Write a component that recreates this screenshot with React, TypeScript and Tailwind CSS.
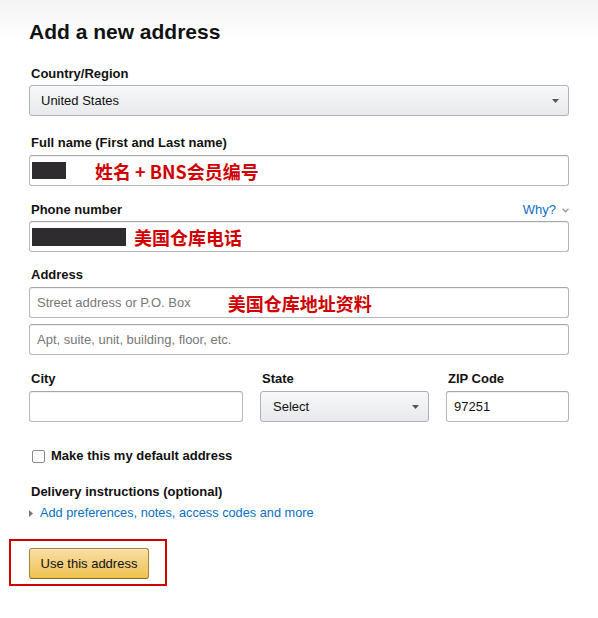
import React from 'react'

const sans = { fontFamily: '"Liberation Sans", Arial, sans-serif' }

function Label({ children, right }: { children: React.ReactNode; right?: React.ReactNode }) {
  return (
    <div className="flex items-center justify-between pl-[2px] text-[13px] leading-[18px] font-bold text-[#111]">
      <span>{children}</span>
      {right}
    </div>
  )
}

function Field({ children, className = '' }: { children?: React.ReactNode; className?: string }) {
  return (
    <div
      className={`flex h-[31px] items-center rounded-[3px] border border-[#b7b7b7] border-t-[#a6a6a6] bg-white shadow-[inset_0_1px_0_rgba(0,0,0,0.06)] ${className}`}
    >
      {children}
    </div>
  )
}

function Caret() {
  return (
    <svg width="7" height="4" viewBox="0 0 7 4" className="shrink-0">
      <path d="M0 0h7L3.5 4z" fill="#555" />
    </svg>
  )
}

function Note({ children, className = '' }: { children: React.ReactNode; className?: string }) {
  return (
    <span
      className={`text-[18px] leading-none font-bold text-[#d00000] ${className}`}
      style={{ fontFamily: '"Noto Sans CJK SC", "Noto Sans", sans-serif' }}
    >
      {children}
    </span>
  )
}

export default function App() {
  return (
    <div
      className="min-h-screen bg-[linear-gradient(to_bottom,#f3f3f3_0px,#ffffff_38px)] px-[29px] pt-[20px] text-[#111]"
      style={sans}
    >
      <div className="w-[540px]">
        <h1 className="text-[21px] leading-[24px] font-bold text-[#111]">Add a new address</h1>

        <div className="mt-[21px]">
          <Label>Country/Region</Label>
          <div className="mt-[2px] flex h-[31px] items-center justify-between rounded-[3px] border border-[#adb1b8] bg-gradient-to-b from-[#f7f8fa] to-[#e7e9ec] pl-[11px] pr-[9px] text-[13px] shadow-[0_1px_0_rgba(255,255,255,0.6)_inset]">
            <span>United States</span>
            <Caret />
          </div>
        </div>

        <div className="mt-[18px]">
          <Label>Full name (First and Last name)</Label>
          <Field className="mt-[3px] pl-[2px]">
            <span className="h-[17px] w-[34px] bg-[#2e2c2f]" />
            <Note className="ml-[29px]">姓名 + BNS会员编号</Note>
          </Field>
        </div>

        <div className="mt-[15px]">
          <Label
            right={
              <span className="flex items-center gap-[6px] font-normal text-[13px] text-[#0a6fc2]">
                Why?
                <svg width="7" height="5" viewBox="0 0 7 5">
                  <path d="M0.5 0.8L3.5 3.8L6.5 0.8" fill="none" stroke="#9a9a9a" strokeWidth="1.3" />
                </svg>
              </span>
            }
          >
            Phone number
          </Label>
          <Field className="mt-[2px] pl-[2px]">
            <span className="h-[18px] w-[94px] bg-[#2e2c2f]" />
            <Note className="ml-[8px]">美国仓库电话</Note>
          </Field>
        </div>

        <div className="mt-[14px]">
          <Label>Address</Label>
          <Field className="mt-[3px] pl-[7px]">
            <span className="text-[13px] text-[#777]">Street address or P.O. Box</span>
            <Note className="ml-[37px]">美国仓库地址资料</Note>
          </Field>
          <Field className="mt-[6px] pl-[7px]">
            <span className="text-[13px] text-[#777]">Apt, suite, unit, building, floor, etc.</span>
          </Field>
        </div>

        <div className="mt-[15px] grid grid-cols-[214px_169px_123px] gap-x-[17px]">
          <div>
            <Label>City</Label>
            <Field className="mt-[3px]" />
          </div>
          <div>
            <Label>State</Label>
            <div className="mt-[3px] flex h-[31px] items-center justify-between rounded-[3px] border border-[#adb1b8] bg-gradient-to-b from-[#f7f8fa] to-[#e7e9ec] pl-[12px] pr-[9px] text-[13px]">
              <span>Select</span>
              <Caret />
            </div>
          </div>
          <div>
            <Label>ZIP Code</Label>
            <Field className="mt-[3px] pl-[7px]">
              <span className="text-[13px]">97251</span>
            </Field>
          </div>
        </div>

        <div className="mt-[25px] flex items-center pl-[3px] text-[13px] leading-[18px] font-bold">
          <span className="h-[13px] w-[13px] rounded-[2px] border border-[#8a8a8a] bg-white" />
          <span className="ml-[6px]">Make this my default address</span>
        </div>

        <div className="mt-[18px]">
          <Label>Delivery instructions (optional)</Label>
          <div className="mt-[3px] flex items-center text-[12.75px] leading-[18px] text-[#0a6fc2]">
            <svg width="4" height="7" viewBox="0 0 4 7" className="mr-[7px]">
              <path d="M0 0L4 3.5L0 7z" fill="#777" />
            </svg>
            <span>Add preferences, notes, access codes and more</span>
          </div>
        </div>

        <div className="-ml-[20px] mt-[17px] inline-block border-2 border-[#d00000] pt-[7px] pr-[16px] pb-[5px] pl-[18px]">
          <button className="h-[31px] w-[120px] rounded-[3px] border border-[#a88734] border-b-[#846a29] bg-gradient-to-b from-[#f7dfa5] to-[#f0c14b] text-[13px] text-[#111] shadow-[inset_0_1px_0_rgba(255,255,255,0.4)]">
            Use this address
          </button>
        </div>
      </div>
    </div>
  )
}
